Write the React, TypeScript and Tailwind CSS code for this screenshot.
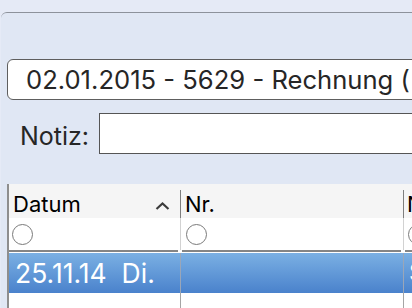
import React from "react";

function Radio() {
  return <div className="w-[21px] h-[21px] rounded-full border border-[#7a7a7a] bg-white" />;
}

export default function App() {
  return (
    <div
      className="w-[412px] h-[308px] overflow-hidden bg-[#e5eaf6] flex flex-col"
      style={{ fontFamily: "Inter, 'Liberation Sans', sans-serif" }}
    >
      <div className="h-[12px] shrink-0" />
      <div className="flex-1 ml-[1px] border-t border-[#8d929b] rounded-tl-[6px] bg-[#e0e7f4] flex flex-col min-h-0 overflow-hidden">
        <div className="h-[46px] shrink-0" />
        {/* Select */}
        <div className="ml-[6px] w-[480px] h-[41px] shrink-0 rounded-[6px] border border-[#5e5e5e] bg-white flex items-center pl-[18px]">
          <span className="text-[25.6px] leading-none text-[#262626] whitespace-nowrap">
            02.01.2015 - 5629 - Rechnung (
          </span>
        </div>
        {/* Notiz */}
        <div className="mt-[13px] h-[41px] shrink-0 flex items-center">
          <span className="ml-[19px] w-[79px] shrink-0 text-[25px] leading-none text-[#262626] pt-[5px]">Notiz:</span>
          <div className="w-[340px] shrink-0 h-[41px] border border-[#555555] bg-white" />
        </div>
        {/* Table */}
        <div className="mt-[30px] ml-[6px] flex-1 border-l-2 border-[#8e8e8e] bg-white flex flex-col text-black">
          {/* Header */}
          <div className="h-[34px] bg-[#f5f5f5] flex shrink-0">
            <div className="w-[171px] shrink-0 flex items-end pb-[3px] pl-[4px] relative">
              <span className="text-[22px] leading-none">Datum</span>
              <svg className="absolute left-[146px] top-[18px]" width="15" height="8" viewBox="0 0 15 8">
                <path d="M1.5 7 L7.5 1.5 L13.5 7" fill="none" stroke="#3c3c3c" strokeWidth="2.2" />
              </svg>
            </div>
            <div className="w-px shrink-0 h-[28px] self-end bg-[#7e7e7e]" />
            <div className="w-[222px] shrink-0 flex items-end pb-[3px] pl-[4px]">
              <span className="text-[22px] leading-none">Nr.</span>
            </div>
            <div className="w-px shrink-0 h-[28px] self-end bg-[#7e7e7e]" />
            <div className="w-[60px] shrink-0 flex items-end pb-[3px] pl-[3px]">
              <span className="text-[22px] leading-none whitespace-nowrap">Name</span>
            </div>
          </div>
          {/* Filter row */}
          <div className="h-[32px] flex shrink-0">
            <div className="w-[171px] shrink-0 pl-[3px] pt-[6px]"><Radio /></div>
            <div className="w-px shrink-0 bg-[#d2d2d2]" />
            <div className="w-[222px] shrink-0 pl-[5px] pt-[6px]"><Radio /></div>
            <div className="w-px shrink-0 bg-[#d2d2d2]" />
            <div className="w-[60px] shrink-0 pl-[4px] pt-[6px]"><Radio /></div>
          </div>
          {/* Double line */}
          <div className="h-[3px] flex shrink-0">
            <div className="w-[169px] shrink-0 h-[2px] bg-[#858585]" />
            <div className="w-[4px] shrink-0" />
            <div className="w-[219px] shrink-0 h-[2px] bg-[#858585]" />
            <div className="w-[4px] shrink-0" />
            <div className="w-[60px] shrink-0 h-[2px] bg-[#858585]" />
          </div>
          {/* Selected row */}
          <div className="h-[40px] flex shrink-0 bg-gradient-to-b from-[#7bb0e3] to-[#4a82cc] text-white">
            <div className="w-[171px] shrink-0 pl-[6px] flex items-center">
              <span className="text-[26.5px] leading-none whitespace-pre">25.11.14  Di.</span>
            </div>
            <div className="w-px shrink-0 bg-[#9aa6b8]" />
            <div className="w-[222px] shrink-0" />
            <div className="w-px shrink-0 bg-[#9aa6b8]" />
            <div className="w-[60px] shrink-0 pl-[5px] flex items-center">
              <span className="text-[24px] leading-none whitespace-nowrap">S</span>
            </div>
          </div>
          {/* Empty row */}
          <div className="flex-1 flex">
            <div className="w-[171px] shrink-0" />
            <div className="w-px shrink-0 bg-[#a5a5a5]" />
            <div className="w-[222px] shrink-0" />
            <div className="w-px shrink-0 bg-[#a5a5a5]" />
            <div className="w-[60px] shrink-0" />
          </div>
        </div>
      </div>
    </div>
  );
}
